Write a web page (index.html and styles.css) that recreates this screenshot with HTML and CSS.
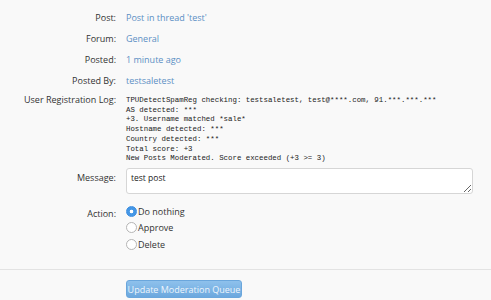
FILE: index.html
```html
<!DOCTYPE html>
<html lang="en">

<head>
  <meta charset="UTF-8">
  <meta name="viewport" content="width=device-width, initial-scale=1.0">
  <title>Moderation Queue</title>
  <link rel="stylesheet" href="styles.css">
</head>

<body>
  <form class="queue-form">
    <dl class="ctrl-unit">
      <dt>Post:</dt>
      <dd><a href="#">Post in thread 'test'</a></dd>
    </dl>
    <dl class="ctrl-unit">
      <dt>Forum:</dt>
      <dd><a href="#">General</a></dd>
    </dl>
    <dl class="ctrl-unit">
      <dt>Posted:</dt>
      <dd><a href="#">1 minute ago</a></dd>
    </dl>
    <dl class="ctrl-unit">
      <dt>Posted By:</dt>
      <dd><a href="#">testsaletest</a></dd>
    </dl>
    <dl class="ctrl-unit log-unit">
      <dt>User Registration Log:</dt>
      <dd>
        <pre class="reg-log">TPUDetectSpamReg checking: testsaletest, test@****.com, 91.***.***.***
AS detected: ***
+3. Username matched *sale*
Hostname detected: ***
Country detected: ***
Total score: +3
New Posts Moderated. Score exceeded (+3 >= 3)</pre>
      </dd>
    </dl>
    <dl class="ctrl-unit message-unit">
      <dt>Message:</dt>
      <dd><textarea class="message-box">test post</textarea></dd>
    </dl>
    <dl class="ctrl-unit action-unit">
      <dt>Action:</dt>
      <dd>
        <ul class="action-list">
          <li><label><input type="radio" name="action" checked>Do nothing</label></li>
          <li><label><input type="radio" name="action">Approve</label></li>
          <li><label><input type="radio" name="action">Delete</label></li>
        </ul>
      </dd>
    </dl>
    <div class="submit-unit">
      <button type="button" class="button-primary">Update Moderation Queue</button>
    </div>
  </form>
</body>

</html>
```

FILE: styles.css
```css
body {
  margin: 0;
  background-color: #f9f9f9;
  font-family: 'Open Sans', sans-serif;
  font-size: 9px;
  color: #333;
}

.queue-form {
  padding-top: 8px;
}

.ctrl-unit {
  display: grid;
  grid-template-columns: 116px 1fr;
  column-gap: 10px;
  margin: 0;
  min-height: 21px;
}

.ctrl-unit dt {
  text-align: right;
  line-height: 20px;
}

.ctrl-unit dd {
  margin: 0;
  line-height: 20px;
}

.ctrl-unit a {
  color: #5b8fc4;
  text-decoration: none;
}

.log-unit {
  margin-top: 1px;
}

.log-unit dt {
  line-height: 14px;
}

.reg-log {
  margin: 3px 0 0;
  font-family: 'Liberation Mono', monospace;
  font-size: 7.4px;
  line-height: 9.7px;
  color: #222;
}

.message-unit {
  margin-top: 4px;
}

.message-unit dt {
  line-height: 18px;
  padding-top: 1px;
}

.message-box {
  box-sizing: border-box;
  display: block;
  width: 347px;
  height: 26px;
  padding: 3px 4px;
  border: 1px solid #d6d6d6;
  border-radius: 3px;
  background: #fff;
  font-family: 'Open Sans', sans-serif;
  font-size: 8.5px;
  color: #222;
  resize: vertical;
}

.action-unit {
  margin-top: 10px;
}

.action-list {
  list-style: none;
  margin: 0;
  padding: 0;
}

.action-list li {
  line-height: 16.5px;
}

.action-list input {
  appearance: none;
  box-sizing: border-box;
  width: 11px;
  height: 11px;
  margin: 0 1px 0 0;
  vertical-align: -2px;
  border: 1px solid #b5b5b5;
  border-radius: 50%;
  background: #fff;
}

.action-list input:checked {
  border-color: #3d8ee0;
  background: radial-gradient(circle, #fff 0 1.6px, #4597e6 2.1px);
}

.submit-unit {
  margin-top: 16px;
  border-top: 1px solid #e3e3e3;
  padding: 10px 0 0 126px;
}

.button-primary {
  width: 116px;
  height: 18px;
  padding: 0;
  border: 1px solid #6aa6dc;
  border-radius: 3px;
  background: linear-gradient(#8ec1ec, #6ca8de);
  color: #eef5fc;
  font-family: 'Open Sans', sans-serif;
  font-size: 9px;
  white-space: nowrap;
}
```
